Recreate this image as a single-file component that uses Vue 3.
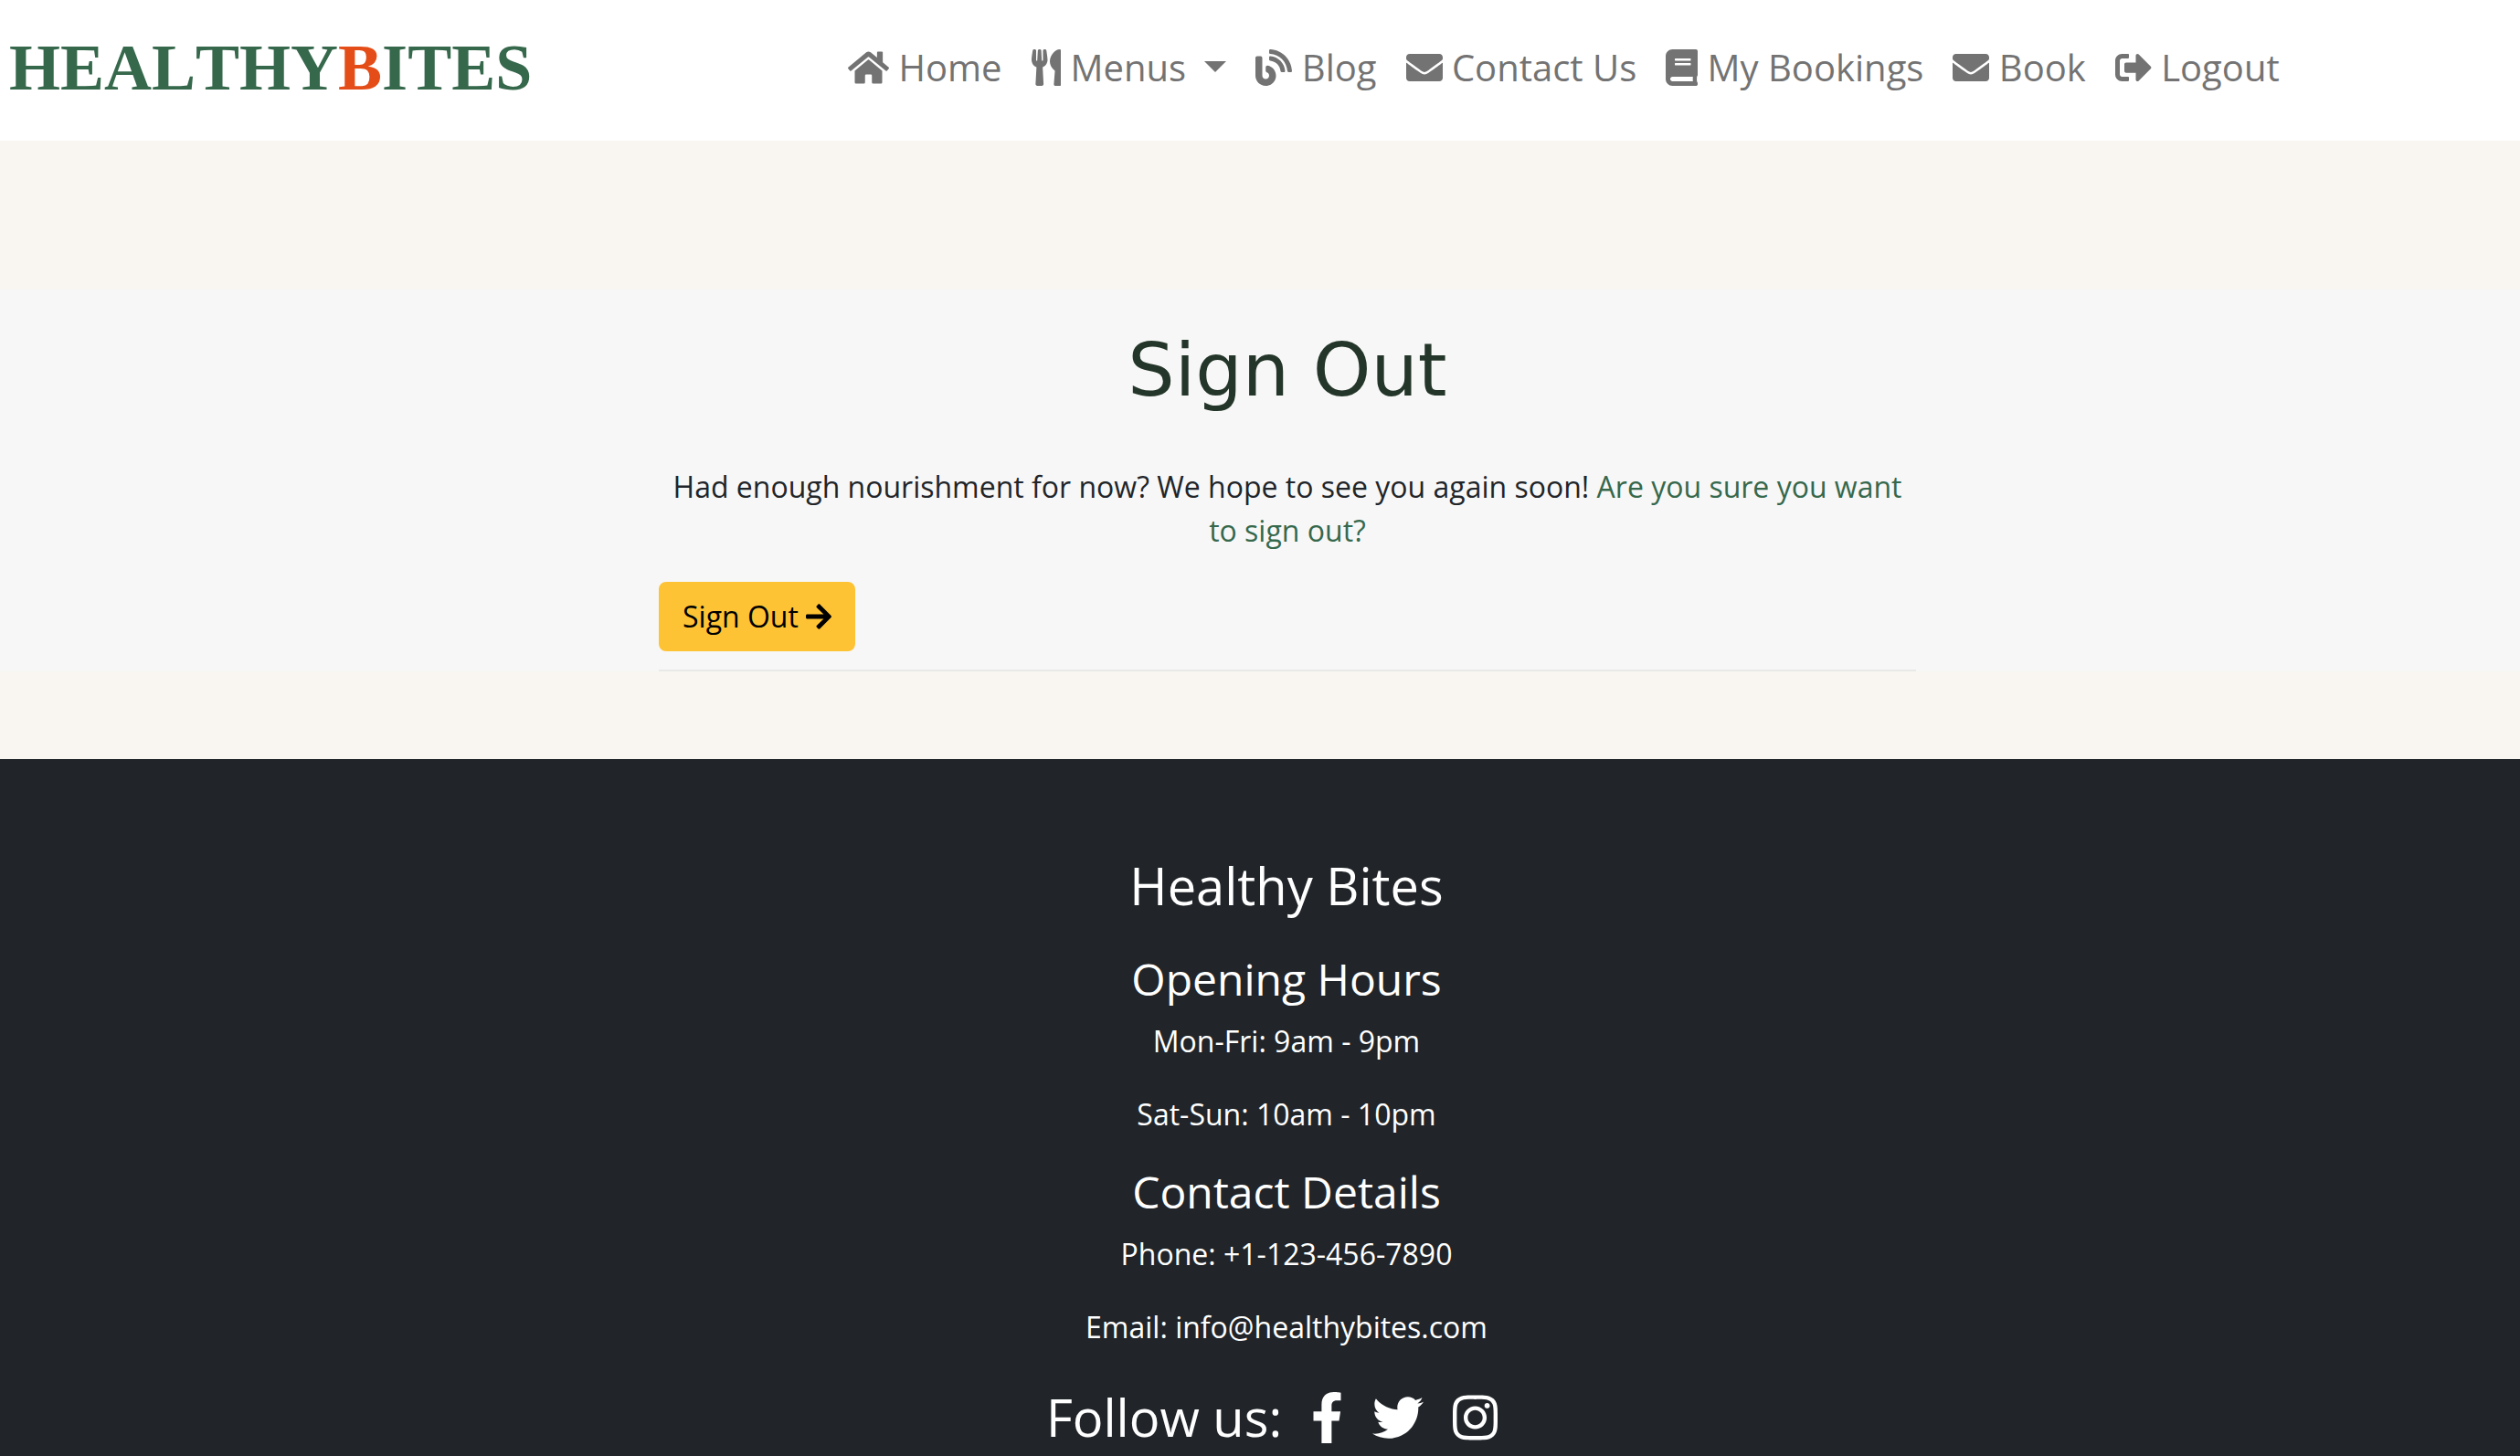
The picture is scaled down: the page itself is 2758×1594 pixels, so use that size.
<script setup>
const icons = {
  home: { w: 576, d: 'M280.37 148.26L96 300.11V464a16 16 0 0 0 16 16l112.06-.29a16 16 0 0 0 15.92-16V368a16 16 0 0 1 16-16h64a16 16 0 0 1 16 16v95.64a16 16 0 0 0 16 16.05L464 480a16 16 0 0 0 16-16V300L295.67 148.26a12.19 12.19 0 0 0-15.3 0zM571.6 251.47L488 182.56V44.05a12 12 0 0 0-12-12h-56a12 12 0 0 0-12 12v72.61L318.47 43a48 48 0 0 0-61 0L4.34 251.47a12 12 0 0 0-1.6 16.9l25.5 31A12 12 0 0 0 45.15 301l235.22-193.74a12.19 12.19 0 0 1 15.3 0L530.9 301a12 12 0 0 0 16.9-1.6l25.5-31a12 12 0 0 0-1.7-16.93z' },
  utensils: { w: 416, d: 'M207.9 15.2c.8 4.7 16.1 94.5 16.1 128.8 0 52.3-27.8 89.6-68.9 104.6L168 486.7c.7 13.7-10.2 25.3-24 25.3H80c-13.7 0-24.7-11.5-24-25.3l12.9-238.1C27.7 233.6 0 196.2 0 144 0 109.6 15.3 19.9 16.1 15.2 19.3-5.1 61.4-5.4 64 16.3v141.2c1.3 3.4 15.1 3.2 16 0 1.4-25.3 7.9-139.2 8-141.8 3.3-20.8 44.7-20.8 47.9 0 .2 2.7 6.6 116.5 8 141.8.9 3.2 14.8 3.4 16 0V16.3c2.6-21.6 44.8-21.4 48-1.1zm119.2 285.7l-15 185.1c-1.2 14 9.9 26 23.9 26h56c13.3 0 24-10.7 24-24V24c0-13.2-10.7-24-24-24-82.5 0-221.4 178.5-64.9 300.9z' },
  blog: { w: 512, d: 'M172.2 226.8c-14.6-2.9-28.2 8.9-28.2 23.8V301c0 10.2 7.1 18.4 16.7 22 18.2 6.8 31.3 24.4 31.3 45 0 26.5-21.5 48-48 48s-48-21.5-48-48V120c0-13.3-10.7-24-24-24H24c-13.3 0-24 10.7-24 24v248c0 89.5 82.1 160.2 175 140.7 54.4-11.4 98.3-55.4 109.7-109.7 17.4-82.9-37-157.2-112.5-172.2zM209 0c-9.2-.5-17 6.8-17 16v31.6c0 8.5 6.6 15.5 15 15.9 129.4 7 233.4 112 240.9 241.5.5 8.4 7.5 15 15.9 15h32.1c9.2 0 16.5-7.8 16-17C503.4 139.8 372.2 8.6 209 0zm.3 96c-9.3-.7-17.3 6.7-17.3 16.1v32.1c0 8.4 6.5 15.3 14.8 15.9 76.8 6.3 138 68.2 144.9 145.2.8 8.3 7.6 14.7 15.9 14.7h32.2c9.3 0 16.8-8 16.1-17.3-8.4-110.1-96.5-198.2-206.6-206.7z' },
  envelope: { w: 512, d: 'M502.3 190.8c3.9-3.1 9.7-.2 9.7 4.7V400c0 26.5-21.5 48-48 48H48c-26.5 0-48-21.5-48-48V195.6c0-5 5.7-7.8 9.7-4.7 22.4 17.4 52.1 39.5 154.1 113.6 21.1 15.4 56.7 47.8 92.2 47.6 35.7.3 72-32.8 92.3-47.6 102-74.1 131.6-96.3 154-113.7zM256 320c23.2.4 56.6-29.2 73.4-41.4 132.7-96.3 142.8-104.7 173.4-128.7 5.8-4.5 9.2-11.5 9.2-18.9v-19c0-26.5-21.5-48-48-48H48c-26.5 0-48 21.5-48 48v19c0 7.4 3.4 14.3 9.2 18.9 30.6 23.9 40.7 32.4 173.4 128.7 16.8 12.2 50.2 41.8 73.4 41.4z' },
  book: { w: 448, d: 'M448 360V24c0-13.3-10.7-24-24-24H96C43 0 0 43 0 96v320c0 53 43 96 96 96h328c13.3 0 24-10.7 24-24v-16c0-7.5-3.5-14.3-8.9-18.7-4.2-15.4-4.2-59.3 0-74.7 5.4-4.3 8.9-11.1 8.9-18.6zM128 134c0-3.3 2.7-6 6-6h212c3.3 0 6 2.7 6 6v20c0 3.3-2.7 6-6 6H134c-3.3 0-6-2.7-6-6v-20zm0 64c0-3.3 2.7-6 6-6h212c3.3 0 6 2.7 6 6v20c0 3.3-2.7 6-6 6H134c-3.3 0-6-2.7-6-6v-20zm253.4 250H96c-17.7 0-32-14.3-32-32 0-17.6 14.4-32 32-32h285.4c-1.9 17.1-1.9 46.9 0 64z' },
  signOut: { w: 512, d: 'M497 273L329 441c-15 15-41 4.5-41-17v-96H152c-13.3 0-24-10.7-24-24v-96c0-13.3 10.7-24 24-24h136V88c0-21.4 25.9-32 41-17l168 168c9.3 9.4 9.3 24.6 0 34zM192 436v-40c0-6.6-5.4-12-12-12H96c-17.7 0-32-14.3-32-32V160c0-17.7 14.3-32 32-32h84c6.6 0 12-5.4 12-12V76c0-6.6-5.4-12-12-12H96c-53 0-96 43-96 96v192c0 53 43 96 96 96h84c6.6 0 12-5.4 12-12z' },
  arrow: { w: 448, d: 'M190.5 66.9l22.2-22.2c9.4-9.4 24.6-9.4 33.9 0L441 239c9.4 9.4 9.4 24.6 0 33.9L246.6 467.3c-9.4 9.4-24.6 9.4-33.9 0l-22.2-22.2c-9.5-9.5-9.3-25 .4-34.3L311.4 296H24c-13.3 0-24-10.7-24-24v-32c0-13.3 10.7-24 24-24h287.4L190.9 101.2c-9.8-9.3-10-24.8-.4-34.3z' },
  facebook: { w: 320, d: 'M279.14 288l14.22-92.66h-88.91v-60.13c0-25.35 12.42-50.06 52.24-50.06h40.42V6.26S260.43 0 225.36 0c-73.22 0-121.08 44.38-121.08 124.72v70.62H22.89V288h81.39v224h100.17V288z' },
  twitter: { w: 512, d: 'M459.37 151.716c.325 4.548.325 9.097.325 13.645 0 138.72-105.583 298.558-298.558 298.558-59.452 0-114.68-17.219-161.137-47.106 8.447.974 16.568 1.299 25.34 1.299 49.055 0 94.213-16.568 130.274-44.832-46.132-.975-84.792-31.188-98.112-72.772 6.498.974 12.995 1.624 19.818 1.624 9.421 0 18.843-1.3 27.614-3.573-48.081-9.747-84.143-51.98-84.143-102.985v-1.299c13.969 7.797 30.214 12.67 47.431 13.319-28.264-18.843-46.781-51.005-46.781-87.391 0-19.492 5.197-37.36 14.294-52.954 51.655 63.675 129.3 105.258 216.365 109.807-1.624-7.797-2.599-15.918-2.599-24.04 0-57.828 46.782-104.934 104.934-104.934 30.213 0 57.502 12.67 76.67 33.137 23.715-4.548 46.456-13.32 66.599-25.34-7.798 24.366-24.366 44.833-46.132 57.827 21.117-2.273 41.584-8.122 60.426-16.243-14.292 20.791-32.161 39.308-52.628 54.253z' },
  instagram: { w: 448, d: 'M224.1 141c-63.6 0-114.9 51.3-114.9 114.9s51.3 114.9 114.9 114.9S339 319.5 339 255.9 287.7 141 224.1 141zm0 189.6c-41.1 0-74.7-33.5-74.7-74.7s33.5-74.7 74.7-74.7 74.7 33.5 74.7 74.7-33.6 74.7-74.7 74.7zm146.4-194.3c0 14.9-12 26.8-26.8 26.8-14.9 0-26.8-12-26.8-26.8s12-26.8 26.8-26.8 26.8 12 26.8 26.8zm76.1 27.2c-1.7-35.9-9.9-67.7-36.2-93.9-26.2-26.2-58-34.4-93.9-36.2-37-2.1-147.9-2.1-184.9 0-35.8 1.7-67.6 9.9-93.9 36.1s-34.4 58-36.2 93.9c-2.1 37-2.1 147.9 0 184.9 1.7 35.9 9.9 67.7 36.2 93.9s58 34.4 93.9 36.2c37 2.1 147.9 2.1 184.9 0 35.9-1.7 67.7-9.9 93.9-36.2 26.2-26.2 34.4-58 36.2-93.9 2.1-37 2.1-147.8 0-184.8zM398.8 388c-7.8 19.6-22.9 34.7-42.6 42.6-29.5 11.7-99.5 9-132.1 9s-102.7 2.6-132.1-9c-19.6-7.8-34.7-22.9-42.6-42.6-11.7-29.5-9-99.5-9-132.1s-2.6-102.7 9-132.1c7.8-19.6 22.9-34.7 42.6-42.6 29.5-11.7 99.5-9 132.1-9s102.7-2.6 132.1 9c19.6 7.8 34.7 22.9 42.6 42.6 11.7 29.5 9 99.5 9 132.1s2.7 102.7-9 132.1z' },
}

const links = [
  { label: 'Home', icon: icons.home },
  { label: 'Menus', icon: icons.utensils, dropdown: true },
  { label: 'Blog', icon: icons.blog },
  { label: 'Contact Us', icon: icons.envelope },
  { label: 'My Bookings', icon: icons.book },
  { label: 'Book', icon: icons.envelope },
  { label: 'Logout', icon: icons.signOut },
]

const socials = [
  { label: 'Facebook', icon: icons.facebook },
  { label: 'Twitter', icon: icons.twitter },
  { label: 'Instagram', icon: icons.instagram },
]
</script>

<template>
  <div class="page">
    <header class="header">
      <a class="brand" href="#">HEALTHY<span class="accent">B</span>ITES</a>
      <nav class="nav" aria-label="Main">
        <a v-for="link in links" :key="link.label" class="nav-link" href="#">
          <svg class="icon" :viewBox="`0 0 ${link.icon.w} 512`" aria-hidden="true"><path :d="link.icon.d" /></svg>
          {{ link.label }}
          <span v-if="link.dropdown" class="caret"></span>
        </a>
      </nav>
    </header>

    <main class="main">
      <section class="panel">
        <div class="content">
          <h1>Sign Out</h1>
          <p class="message">
            Had enough nourishment for now? We hope to see you again soon!
            <span class="question">Are you sure you want to sign out?</span>
          </p>
          <form @submit.prevent>
            <button class="sign-out" type="submit">
              Sign Out
              <svg class="icon" :viewBox="`0 0 ${icons.arrow.w} 512`" aria-hidden="true"><path :d="icons.arrow.d" /></svg>
            </button>
          </form>
          <hr>
        </div>
      </section>
    </main>

    <footer class="footer">
      <h2>Healthy Bites</h2>
      <h3>Opening Hours</h3>
      <p>Mon-Fri: 9am - 9pm</p>
      <p>Sat-Sun: 10am - 10pm</p>
      <h3>Contact Details</h3>
      <p>Phone: +1-123-456-7890</p>
      <p>Email: info@healthybites.com</p>
      <div class="follow">
        <h2>Follow us:</h2>
        <a v-for="item in socials" :key="item.label" href="#" :aria-label="item.label">
          <svg class="icon" :viewBox="`0 0 ${item.icon.w} 512`" aria-hidden="true"><path :d="item.icon.d" /></svg>
        </a>
      </div>
    </footer>
  </div>
</template>

<style>
body {
  margin: 0;
  background: #212529;
}
</style>

<style scoped>
.page {
  font-family: "Open Sans", "Noto Sans", sans-serif;
  font-size: 32px;
  line-height: 48px;
  font-weight: 400;
  color: #212529;
}

.icon {
  height: 1em;
  width: auto;
  fill: currentColor;
  vertical-align: -0.125em;
}

.header {
  display: flex;
  align-items: flex-start;
  padding: 28px 0 34px;
  background: #fff;
}

.brand {
  flex: 0 0 33%;
  padding-left: 10px;
  box-sizing: border-box;
  font-family: "Liberation Serif", serif;
  font-size: 72px;
  line-height: 92px;
  font-weight: 700;
  font-kerning: none;
  color: #36684c;
  text-decoration: none;
}

.accent {
  color: #e44d17;
}

.nav {
  display: flex;
  padding-left: 2px;
  font-size: 40px;
  line-height: 60px;
}

.nav-link {
  padding: 16px;
  color: #737373;
  text-decoration: none;
  white-space: nowrap;
}

.caret {
  display: inline-block;
  margin-left: 10px;
  vertical-align: 10px;
  border: 12px solid transparent;
  border-top-color: currentColor;
  border-bottom: 0;
}

.main {
  padding: 163px 0 96px;
  background: #f9f6f1;
}

.panel {
  padding: 40px 0 0 60px;
  background: #f7f7f7;
}

.content {
  width: 51%;
  margin: 0 auto;
}

h1 {
  margin: 0 0 56px;
  font-family: Verdana, "DejaVu Sans", sans-serif;
  font-size: 81px;
  line-height: 96px;
  font-weight: 400;
  text-align: center;
  color: #243629;
}

.message {
  margin: 0 0 32px;
  text-align: center;
}

.question {
  color: #36684c;
}

.sign-out {
  display: block;
  padding: 12px 24px;
  border: 2px solid #fec335;
  border-radius: 8px;
  background: #fec335;
  font: inherit;
  color: #000;
}

hr {
  height: 2px;
  margin: 20px 0 0;
  border: 0;
  background: #e9e9e9;
}

.footer {
  padding: 104px 0 4px 58px;
  background: #212529;
  color: #fff;
  font-weight: 400;
  text-align: center;
}

h2,
h3 {
  margin: 0;
  font-weight: 400;
}

h2 {
  font-size: 56px;
  line-height: 68px;
}

h3 {
  margin-bottom: 16px;
  font-size: 48px;
  line-height: 57px;
}

.footer > h2 {
  margin-bottom: 40px;
}

.footer p {
  margin: 0 0 32px;
}

.follow {
  display: flex;
  justify-content: center;
  gap: 32px;
  padding: 8px 32px 0 0;
  font-size: 56px;
  line-height: 68px;
}

.follow a {
  color: #fff;
}
</style>
